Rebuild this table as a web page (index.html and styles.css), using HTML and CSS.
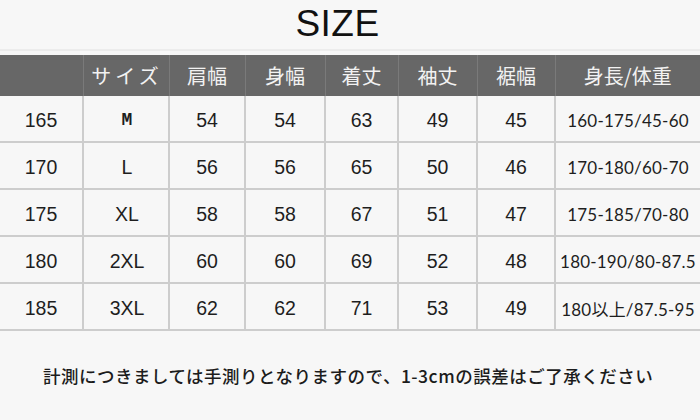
FILE: index.html
```html
<!DOCTYPE html>
<html lang="ja">
<head>
<meta charset="utf-8">
<link rel="stylesheet" href="styles.css">
</head>
<body>
<div class="page">
  <h1 class="title">SIZE</h1>
  <div class="gap"></div>
  <table class="size-table">
    <colgroup>
      <col class="c1"><col class="c2"><col class="c3"><col class="c4"><col class="c5"><col class="c6"><col class="c7"><col class="c8">
    </colgroup>
    <thead>
      <tr>
        <th></th><th class="kana">サイズ</th><th>肩幅</th><th>身幅</th><th>着丈</th><th>袖丈</th><th>裾幅</th><th>身長/体重</th>
      </tr>
    </thead>
    <tbody>
      <tr><td>165</td><td class="sz mono">M</td><td>54</td><td>54</td><td>63</td><td>49</td><td>45</td><td class="hw">160-175/45-60</td></tr>
      <tr><td>170</td><td class="sz">L</td><td>56</td><td>56</td><td>65</td><td>50</td><td>46</td><td class="hw">170-180/60-70</td></tr>
      <tr><td>175</td><td class="sz">XL</td><td>58</td><td>58</td><td>67</td><td>51</td><td>47</td><td class="hw">175-185/70-80</td></tr>
      <tr><td>180</td><td class="sz">2XL</td><td>60</td><td>60</td><td>69</td><td>52</td><td>48</td><td class="hw">180-190/80-87.5</td></tr>
      <tr><td>185</td><td class="sz">3XL</td><td>62</td><td>62</td><td>71</td><td>53</td><td>49</td><td class="hw">180以上/87.5-95</td></tr>
    </tbody>
  </table>
  <p class="note">計測につきましては手測りとなりますので、1-3cmの誤差はご了承ください</p>
</div>
</body>
</html>
```
FILE: styles.css
```css
html, body {
  margin: 0;
  padding: 0;
  background: #f7f7f7;
}
.page {
  width: 700px;
  height: 420px;
  overflow: hidden;
  font-family: "Liberation Sans", "Noto Sans CJK JP", sans-serif;
  color: #1a1a1a;
}
.title {
  margin: 0;
  height: 49px;
  line-height: 48px;
  font-size: 37px;
  font-weight: normal;
  text-align: center;
  padding-right: 25px;
  color: #111;
  letter-spacing: 0.5px;
}
.gap {
  height: 4px;
  border-top: 2px solid #ececec;
}
.size-table {
  width: 700px;
  border-collapse: collapse;
  table-layout: fixed;
}
.c1 { width: 83px; }
.c2 { width: 86px; }
.c3 { width: 76px; }
.c4 { width: 80px; }
.c5 { width: 73px; }
.c6 { width: 79px; }
.c7 { width: 78px; }
.c8 { width: 145px; }
.size-table th {
  height: 41px;
  padding: 0;
  background: #676767;
  color: #f2f2f2;
  font-family: "Noto Sans CJK JP", sans-serif;
  font-weight: normal;
  font-size: 20px;
  border-left: 1px solid #7a7a7a;
  text-align: center;
  vertical-align: middle;
}
.size-table th:first-child { border-left: none; }
.size-table th.kana { letter-spacing: 4px; padding-left: 2px; }
.size-table td {
  height: 42px;
  padding: 3px 0 0 0;
  text-align: center;
  vertical-align: middle;
  font-size: 19.5px;
  color: #1e1e1e;
  border-left: 2px solid #cdcdcd;
  border-bottom: 2px solid #cdcdcd;
}
.size-table td:first-child { border-left: none; }
.size-table td.mono {
  font-family: "Liberation Mono", monospace;
  font-size: 18px;
  font-weight: bold;
}
.size-table td.sz { padding-left: 2px; }
.size-table td.hw {
  font-family: "Lato", "Noto Sans CJK JP", sans-serif;
  font-size: 17px;
  letter-spacing: 0.2px;
}
.note {
  margin: 33px 0 0 43px;
  font-family: "Noto Sans CJK JP", sans-serif;
  font-weight: 500;
  font-size: 17.5px;
  line-height: 24px;
  color: #1c1c1c;
  letter-spacing: 0.5px;
}
```
